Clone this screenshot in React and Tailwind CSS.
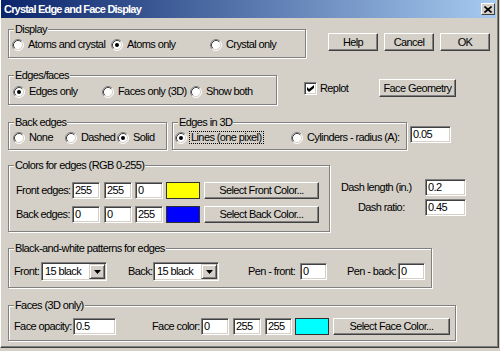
import React from "react";

const Radio = ({ checked }) => (
  <svg width="12" height="12" viewBox="0 0 12 12" className="shrink-0">
    <circle cx="6" cy="6" r="5" fill="#fff" />
    <path d="M2.11 9.89A5.5 5.5 0 0 1 9.89 2.11" fill="none" stroke="#808080" />
    <path d="M9.89 2.11A5.5 5.5 0 0 1 2.11 9.89" fill="none" stroke="#fff" />
    <path d="M2.82 9.18A4.5 4.5 0 0 1 9.18 2.82" fill="none" stroke="#404040" />
    <path d="M9.18 2.82A4.5 4.5 0 0 1 2.82 9.18" fill="none" stroke="#d4d0c8" />
    {checked && <circle cx="6" cy="6" r="2" fill="#000" />}
  </svg>
);

const Option = ({ checked, label, className = "" }) => (
  <div className={`flex items-center gap-[4px] ${className}`}>
    <Radio checked={checked} />
    <span className="whitespace-nowrap">{label}</span>
  </div>
);

const Group = ({ label, className = "", children }) => (
  <fieldset
    className={`border border-[#808080] shadow-[inset_1px_1px_0_#fff,1px_1px_0_#fff] ${className}`}
  >
    <legend className="ml-[5px] px-[1px] leading-[12px] bg-[#d4d0c8] whitespace-nowrap">
      {label}
    </legend>
    {children}
  </fieldset>
);

const Field = ({ value, className = "" }) => (
  <div
    className={`h-[17px] shrink-0 bg-white border border-t-[#808080] border-l-[#808080] border-r-white border-b-white shadow-[inset_1px_1px_0_#404040,inset_-1px_-1px_0_#d4d0c8] pl-[2px] leading-[15px] ${className}`}
  >
    {value}
  </div>
);

const Btn = ({ children, className = "" }) => (
  <button
    type="button"
    className={`flex shrink-0 items-center justify-center bg-[#d4d0c8] border border-t-white border-l-white border-r-[#404040] border-b-[#404040] shadow-[inset_-1px_-1px_0_#808080] whitespace-nowrap ${className}`}
  >
    {children}
  </button>
);

const Swatch = ({ color }) => (
  <div className={`w-[34px] h-[17px] shrink-0 border border-[#303030] ${color}`} />
);

const Select = ({ value, className = "" }) => (
  <div
    className={`h-[19px] shrink-0 flex bg-white border border-t-[#808080] border-l-[#808080] border-r-white border-b-white shadow-[inset_1px_1px_0_#404040,inset_-1px_-1px_0_#d4d0c8] p-[1px] ${className}`}
  >
    <span className="flex-1 pl-[2px] leading-[15px]">{value}</span>
    <div className="w-[16px] h-full flex items-center justify-center bg-[#d4d0c8] border border-t-[#d4d0c8] border-l-[#d4d0c8] border-r-[#404040] border-b-[#404040] shadow-[inset_1px_1px_0_#fff,inset_-1px_-1px_0_#808080]">
      <svg width="7" height="4" viewBox="0 0 7 4">
        <path d="M0 0h7L3.5 4z" fill="#000" />
      </svg>
    </div>
  </div>
);

export default function App() {
  return (
    <div className="w-[500px] h-[351px] bg-[#d4d0c8] overflow-hidden font-['Liberation_Sans',Arial,sans-serif] text-[11px] leading-[13px] tracking-[-0.6px] text-black">
      <div className="w-[499px] h-[348px] border-l border-l-white border-r border-b border-r-[#404040] border-b-[#404040] shadow-[inset_-1px_-1px_0_#808080]">
        {/* title bar */}
        <div className="h-[18px] mr-[2px] flex items-center bg-[linear-gradient(to_right,#0a246a,#a6caf0)]">
          <span className="flex-1 pl-[3px] font-bold text-white tracking-[-0.8px]">
            Crystal Edge and Face Display
          </span>
          <div className="w-[14px] h-[12px] mr-[1px] flex items-center justify-center bg-[#d4d0c8] border border-t-white border-l-white border-r-[#404040] border-b-[#404040]">
            <svg width="8" height="7" viewBox="0 0 8 7">
              <path d="M0.5 0.5L7.5 6.5M7.5 0.5L0.5 6.5" stroke="#000" strokeWidth="1.6" />
            </svg>
          </div>
        </div>

        <div className="flex flex-col pl-[7px]">
          {/* display + dialog buttons */}
          <div className="flex items-start mt-[5px]">
            <Group label="Display" className="w-[298px] h-[35px]">
              <div className="flex items-center pl-[3px] pt-[3px]">
                <Option label="Atoms and crystal" className="w-[99px]" />
                <Option checked label="Atoms only" className="w-[99px]" />
                <Option label="Crystal only" />
              </div>
            </Group>
            <div className="flex gap-[6px] ml-[22px] mt-[10px]">
              <Btn className="w-[50px] h-[18px]">Help</Btn>
              <Btn className="w-[50px] h-[18px]">Cancel</Btn>
              <Btn className="w-[50px] h-[18px]">OK</Btn>
            </div>
          </div>

          {/* edges / faces */}
          <div className="flex items-start mt-[11px]">
            <Group label="Edges/faces" className="w-[269px] h-[36px]">
              <div className="flex items-center pl-[4px] pt-[4px]">
                <Option checked label="Edges only" className="w-[89px]" />
                <Option label="Faces only (3D)" className="w-[88px]" />
                <Option label="Show both" />
              </div>
            </Group>
            <div className="flex items-center gap-[3px] w-[75px] ml-[27px] mt-[13px]">
              <div className="w-[13px] h-[13px] flex items-center justify-center bg-white border border-t-[#808080] border-l-[#808080] border-r-white border-b-white shadow-[inset_1px_1px_0_#404040,inset_-1px_-1px_0_#d4d0c8]">
                <svg width="7" height="7" viewBox="0 0 7 7">
                  <path d="M0 2L2 4L7 0V3L2 7L0 5Z" fill="#000" />
                </svg>
              </div>
              <span>Replot</span>
            </div>
            <Btn className="w-[77px] h-[18px] mt-[10px]">Face Geometry</Btn>
          </div>

          {/* back edges / edges in 3D */}
          <div className="flex items-start mt-[11px]">
            <Group label="Back edges" className="w-[159px] h-[34px]">
              <div className="flex items-center pl-[4px] pt-[3px]">
                <Option label="None" className="w-[52px]" />
                <Option label="Dashed" className="w-[52px]" />
                <Option checked label="Solid" />
              </div>
            </Group>
            <Group label="Edges in 3D" className="w-[235px] h-[34px] ml-[5px]">
              <div className="flex items-center pl-[2px] pt-[3px]">
                <div className="flex items-center gap-[2px] w-[116px]">
                  <Radio checked />
                  <span className="border border-dotted border-black px-[1px] leading-[11px] whitespace-nowrap">
                    Lines (one pixel)
                  </span>
                </div>
                <Option label="Cylinders - radius (A):" />
              </div>
            </Group>
            <Field value="0.05" className="w-[41px] ml-[3px] mt-[10px]" />
          </div>

          {/* colors for edges */}
          <div className="flex items-start mt-[9px]">
            <Group label="Colors for edges (RGB 0-255)" className="w-[322px] h-[73px]">
              <div className="flex flex-col gap-[7px] pl-[7px] pt-[11px]">
                <div className="flex items-center">
                  <span className="w-[56px] whitespace-nowrap">Front edges:</span>
                  <Field value="255" className="w-[28px]" />
                  <Field value="255" className="w-[28px] ml-[4px]" />
                  <Field value="0" className="w-[28px] ml-[3px]" />
                  <div className="ml-[3px]"><Swatch color="bg-[#ffff00]" /></div>
                  <Btn className="w-[115px] h-[17px] ml-[4px]">Select Front Color...</Btn>
                </div>
                <div className="flex items-center">
                  <span className="w-[56px] whitespace-nowrap">Back edges:</span>
                  <Field value="0" className="w-[28px]" />
                  <Field value="0" className="w-[28px] ml-[4px]" />
                  <Field value="255" className="w-[28px] ml-[3px]" />
                  <div className="ml-[3px]"><Swatch color="bg-[#0000ff]" /></div>
                  <Btn className="w-[115px] h-[17px] ml-[4px]">Select Back Color...</Btn>
                </div>
              </div>
            </Group>
            <div className="flex flex-col gap-[3px] ml-[11px] mt-[20px]">
              <div className="flex items-center">
                <span className="w-[84px] whitespace-nowrap">Dash length (in.)</span>
                <Field value="0.2" className="w-[41px]" />
              </div>
              <div className="flex items-center">
                <span className="w-[84px] pl-[17px] whitespace-nowrap">Dash ratio:</span>
                <Field value="0.45" className="w-[41px]" />
              </div>
            </div>
          </div>

          {/* black-and-white patterns */}
          <div className="flex mt-[10px]">
            <Group label="Black-and-white patterns for edges" className="w-[424px] h-[46px]">
              <div className="flex items-center pl-[5px] pt-[8px]">
                <span className="w-[27px]">Front:</span>
                <Select value="15 black" className="w-[66px]" />
                <span className="w-[25px] ml-[21px]">Back:</span>
                <Select value="15 black" className="w-[66px]" />
                <span className="w-[52px] ml-[29px] whitespace-nowrap">Pen - front:</span>
                <Field value="0" className="w-[27px]" />
                <span className="w-[51px] ml-[20px] whitespace-nowrap">Pen - back:</span>
                <Field value="0" className="w-[27px]" />
              </div>
            </Group>
          </div>

          {/* faces */}
          <div className="flex mt-[11px]">
            <Group label="Faces (3D only)" className="w-[448px] h-[42px]">
              <div className="flex items-center pl-[5px] pt-[7px]">
                <span className="w-[59px] whitespace-nowrap">Face opacity:</span>
                <Field value="0.5" className="w-[43px]" />
                <span className="w-[49px] ml-[36px] whitespace-nowrap">Face color:</span>
                <Field value="0" className="w-[28px]" />
                <Field value="255" className="w-[28px] ml-[4px]" />
                <Field value="255" className="w-[27px] ml-[4px]" />
                <div className="ml-[3px]"><Swatch color="bg-[#00ffff]" /></div>
                <Btn className="w-[117px] h-[17px] ml-[4px]">Select Face Color...</Btn>
              </div>
            </Group>
          </div>
        </div>
      </div>
    </div>
  );
}
